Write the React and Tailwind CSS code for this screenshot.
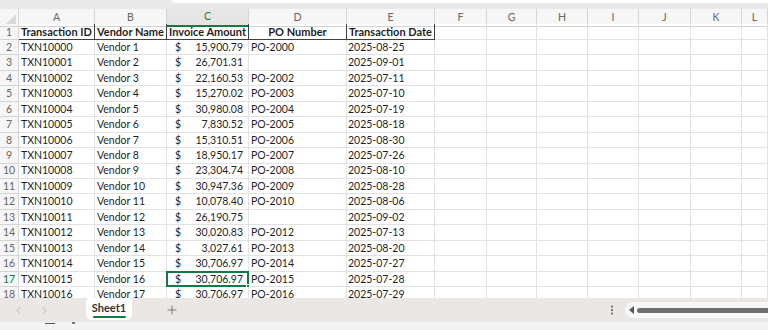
import React from "react";
import { ChevronLeft, ChevronRight, Plus, EllipsisVertical } from "lucide-react";

const rows = [
  ["TXN10000", "Vendor 1", "15,900.79", "PO-2000", "2025-08-25"],
  ["TXN10001", "Vendor 2", "26,701.31", "", "2025-09-01"],
  ["TXN10002", "Vendor 3", "22,160.53", "PO-2002", "2025-07-11"],
  ["TXN10003", "Vendor 4", "15,270.02", "PO-2003", "2025-07-10"],
  ["TXN10004", "Vendor 5", "30,980.08", "PO-2004", "2025-07-19"],
  ["TXN10005", "Vendor 6", "7,830.52", "PO-2005", "2025-08-18"],
  ["TXN10006", "Vendor 7", "15,310.51", "PO-2006", "2025-08-30"],
  ["TXN10007", "Vendor 8", "18,950.17", "PO-2007", "2025-07-26"],
  ["TXN10008", "Vendor 9", "23,304.74", "PO-2008", "2025-08-10"],
  ["TXN10009", "Vendor 10", "30,947.36", "PO-2009", "2025-08-28"],
  ["TXN10010", "Vendor 11", "10,078.40", "PO-2010", "2025-08-06"],
  ["TXN10011", "Vendor 12", "26,190.75", "", "2025-09-02"],
  ["TXN10012", "Vendor 13", "30,020.83", "PO-2012", "2025-07-13"],
  ["TXN10013", "Vendor 14", "3,027.61", "PO-2013", "2025-08-20"],
  ["TXN10014", "Vendor 15", "30,706.97", "PO-2014", "2025-07-27"],
  ["TXN10015", "Vendor 16", "30,706.97", "PO-2015", "2025-07-28"],
  ["TXN10016", "Vendor 17", "30,706.97", "PO-2016", "2025-07-29"],
];

const letters = ["A", "B", "C", "D", "E", "F", "G", "H", "I", "J", "K", "L"];
const gridCols =
  "grid grid-cols-[19px_76px_72px_82px_98px_88px_52px_50px_51px_51px_52px_51px_1fr]";
const line = "border-r border-b border-[#e2e2e2]";

function EmptyCells() {
  return (
    <>
      {Array.from({ length: 7 }).map((_, i) => (
        <div key={i} className={line} />
      ))}
    </>
  );
}

export default function App() {
  return (
    <div
      className="w-[768px] h-[330px] overflow-hidden bg-white flex flex-col text-[#1f1f1f]"
      style={{ fontFamily: "Lato, 'Liberation Sans', sans-serif" }}
    >
      {/* top strip */}
      <div className="h-[9px] bg-[#e9e9e9] flex shrink-0">
        <div className="w-[172px]" />
        <div className="flex-1 h-[3px] bg-white rounded-bl-md" />
      </div>

      {/* column headers */}
      <div className={`${gridCols} h-[15px] shrink-0 bg-[#f6f6f6] text-[10.5px] text-[#666]`}>
        <div className="relative border-r border-b border-[#d4d4d4]">
          <div className="absolute right-[2px] bottom-[2px] w-0 h-0 border-l-[10px] border-l-transparent border-b-[10px] border-b-[#dadada]" />
        </div>
        {letters.map((l) =>
          l === "C" ? (
            <div
              key={l}
              className="flex items-center justify-center bg-[#e6e6e6] border-r border-[#d4d4d4] border-b-2 border-b-[#107c41] text-[#107c41]"
            >
              {l}
            </div>
          ) : (
            <div key={l} className="flex items-center justify-center border-r border-b border-[#d4d4d4]">
              {l}
            </div>
          )
        )}
      </div>

      {/* rows */}
      <div className="h-[274px] overflow-hidden shrink-0 text-[10.5px] leading-none">
        {/* header row 1 */}
        <div className={`${gridCols} h-[16px] font-bold text-[11px]`}>
          <div className="flex items-end justify-center pb-[2px] font-normal text-[10.5px] text-[#666] bg-[#f6f6f6] border-r border-b border-[#d4d4d4]">
            1
          </div>
          <div className="flex items-end pl-[2px] pb-[2px] border-r border-b border-[#404040] whitespace-nowrap">
            Transaction ID
          </div>
          <div className="flex items-end pl-[2px] pb-[2px] border-r border-b border-[#404040] whitespace-nowrap">
            Vendor Name
          </div>
          <div className="flex items-end pl-[2px] pb-[2px] border-r border-b border-[#404040] whitespace-nowrap">
            Invoice Amount
          </div>
          <div className="flex items-end justify-center pb-[2px] border-r border-b border-[#404040] whitespace-nowrap">
            PO Number
          </div>
          <div className="flex items-end pl-[2px] pb-[2px] border-r border-b border-[#404040] whitespace-nowrap">
            Transaction Date
          </div>
          <EmptyCells />
        </div>

        {rows.map((r, i) => {
          const n = i + 2;
          const selected = n === 17;
          return (
            <div key={n} className={`${gridCols} h-[15.44px]`}>
              <div
                className={`flex items-end justify-center pb-[2px] bg-[#f6f6f6] border-r border-b border-[#d4d4d4] ${
                  selected ? "text-[#107c41]" : "text-[#666]"
                }`}
              >
                {n}
              </div>
              <div className={`flex items-end pl-[2px] pb-[2px] whitespace-nowrap ${line}`}>{r[0]}</div>
              <div className={`flex items-end pl-[2px] pb-[2px] whitespace-nowrap ${line}`}>{r[1]}</div>
              <div className={`relative flex items-end justify-between pl-[8px] pr-[5px] pb-[2px] whitespace-nowrap ${line}`}>
                <span>$</span>
                <span>{r[2]}</span>
                {selected && (
                  <div className="absolute -left-[1px] -top-[1px] w-[83px] h-[16px] border-2 border-[#107c41]">
                    <div className="absolute -right-[3px] -bottom-[3px] w-[4px] h-[4px] bg-[#107c41] border border-white" />
                  </div>
                )}
              </div>
              <div className={`flex items-end pl-[2px] pb-[2px] whitespace-nowrap ${line}`}>{r[3]}</div>
              <div className={`flex items-end pl-[1px] pb-[2px] whitespace-nowrap ${line}`}>{r[4]}</div>
              <EmptyCells />
            </div>
          );
        })}
      </div>

      {/* sheet tab bar */}
      <div className="h-[24px] shrink-0 bg-[#ebe7e4] flex items-center text-[#9a9a9a]">
        <div className="w-[86px] flex items-center">
          <ChevronLeft size={13} strokeWidth={1.25} className="ml-[12px]" />
          <ChevronRight size={13} strokeWidth={1.25} className="ml-[13px]" />
        </div>
        <div className="self-start h-[22px] w-[46px] bg-white rounded-b-md rounded-t-sm flex flex-col items-center justify-center">
          <span className="text-[11px] font-bold text-[#333] leading-none mt-[1px]">Sheet1</span>
          <div className="mt-[3px] w-[33px] h-[2px] bg-[#107c41] rounded-full" />
        </div>
        <div className="ml-[33px] text-[#555]">
          <Plus size={14} strokeWidth={1.25} />
        </div>
        <div className="ml-auto mr-[7px] text-[#666]">
          <EllipsisVertical size={12} strokeWidth={2.5} />
        </div>
        <div className="w-[143px] h-[16px] bg-[#f7f7f7] rounded-l-full flex items-center pl-[4px]">
          <div className="w-0 h-0 border-y-[4px] border-y-transparent border-r-[5px] border-r-[#555]" />
          <div className="ml-[3px] flex-1 h-[5px] bg-[#707070] rounded-l-full" />
        </div>
      </div>

      {/* status strip */}
      <div className="h-[8px] shrink-0 bg-[#f3f3f3] relative">
        <div className="absolute left-[45px] top-[1px] w-[10px] h-[1px] bg-[#555]" />
        <div className="absolute left-[72px] top-[0px] w-[3px] h-[2px] bg-[#777]" />
      </div>
    </div>
  );
}
